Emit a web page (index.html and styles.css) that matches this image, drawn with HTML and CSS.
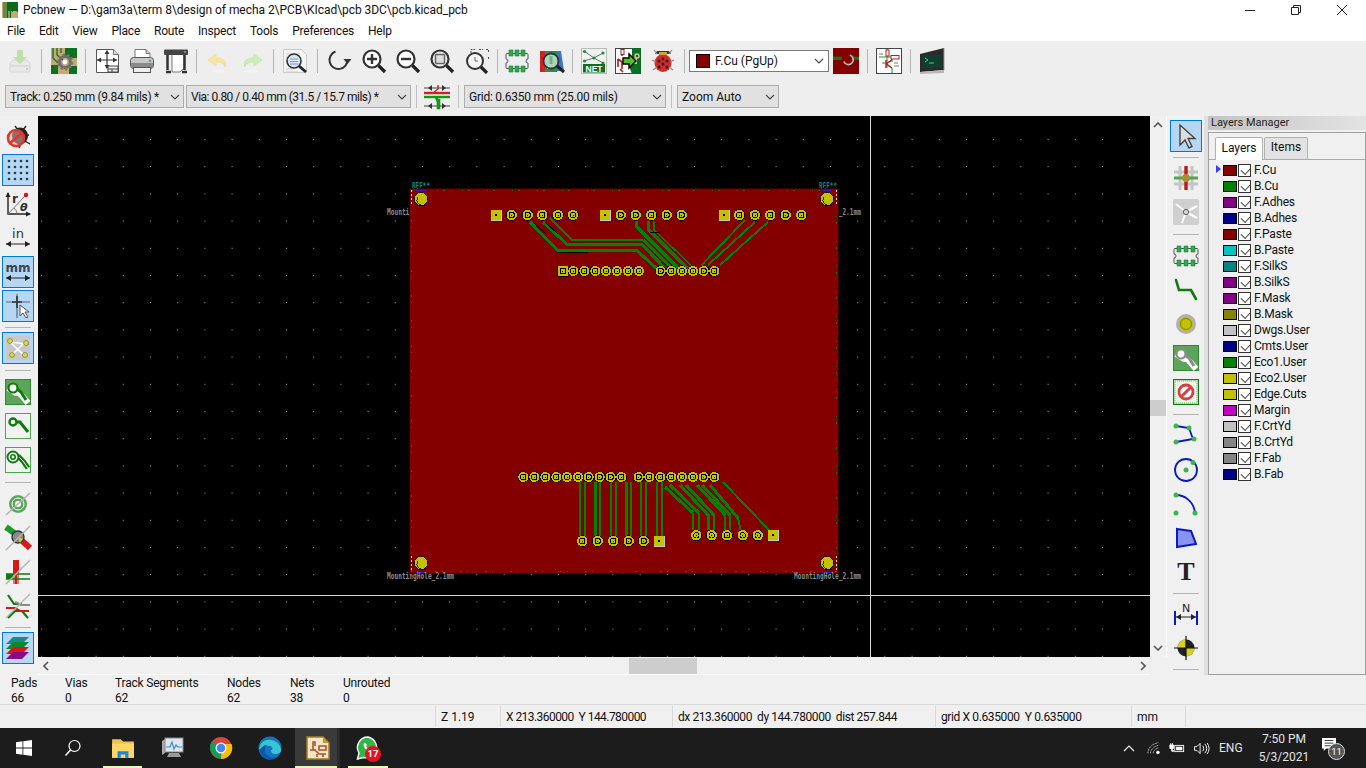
FILE: index.html
```html
<!DOCTYPE html>
<html lang="en">
<head>
<meta charset="utf-8">
<title>Pcbnew</title>
<link rel="stylesheet" href="styles.css">
</head>
<body>
<div class="app">
  <header class="titlebar">
    <svg class="appicon" viewBox="0 0 16 16"><rect width="16" height="16" fill="#0a6b1c"/><path d="M0 0h5v16H0zM9 9h7v7H9z" fill="#c8a86e"/><path d="M2 0v16M4 0v16M7 0v6l4 4M10 0v5l6 5M13 0v4" stroke="#0a6b1c" fill="none"/><path d="M7 9v7" stroke="#e9dcb0"/></svg>
    <span class="titletext">Pcbnew — D:\gam3a\term 8\design of mecha 2\PCB\KIcad\pcb 3DC\pcb.kicad_pcb</span>
    <div class="winctl">
      <svg viewBox="0 0 46 20"><path d="M18 10.500h10" stroke="#222"/></svg>
      <svg viewBox="0 0 46 20"><path d="M18.500 7.500h7v7h-7zM20.500 7.500v-2h7v7h-2" fill="none" stroke="#222"/></svg>
      <svg viewBox="0 0 46 20"><path d="M18 5l10 10M28 5L18 15" stroke="#222" fill="none"/></svg>
    </div>
  </header>
  <nav class="menubar"><span>File</span><span>Edit</span><span>View</span><span>Place</span><span>Route</span><span>Inspect</span><span>Tools</span><span>Preferences</span><span>Help</span></nav>

  <div class="toolbar1">
    <div class="tool"><svg viewBox="0 0 26 26"><path d="M3 15l3-3h14l3 3v8a1 1 0 0 1-1 1H4a1 1 0 0 1-1-1z" fill="#e8e8e8" stroke="#d6d6d6"/><path d="M3 18h20" stroke="#cfcfcf"/><circle cx="20" cy="21" r="1" fill="#a5dcae"/><path d="M10 2h6v7h4l-7 7-7-7h4z" fill="#bfe0a9"/></svg></div>
    <i class="sep s10"></i>
    <div class="tool"><svg viewBox="0 0 26 26"><rect width="26" height="26" fill="#c9a870"/><path d="M14 0h12v10H14zM18 18h8v8h-8zM0 17h7v9H0z" fill="#0d6e24"/><path d="M2 0v10l5 5M6 0v7l6 5M10 0v5M16 4h8M2 20h4" stroke="#14752b" stroke-width="1.400" fill="none"/><circle cx="14" cy="14" r="5.400" fill="none" stroke="#6e6e6e" stroke-width="3"/><circle cx="14" cy="14" r="7.400" fill="none" stroke="#777" stroke-width="2" stroke-dasharray="2.400 2.200"/><circle cx="14" cy="14" r="2.400" fill="#fff"/></svg></div>
    <i class="sep s9"></i>
    <div class="tool"><svg viewBox="0 0 26 26"><path d="M2.500 1.500h17l5 5v18h-22z" fill="#fff" stroke="#555"/><path d="M19.500 1.500v5h5" fill="#ddd" stroke="#777"/><path d="M13 3v17M3 12h20" stroke="#333" stroke-width="1.200"/><path d="M13 2l-2.500 4h5zM13 21l-2.500-4h5zM3 12l4-2.500v5zM23 12l-4-2.500v5z" fill="#333"/><path d="M14 18h10v6H14zM14 21h10M18 21v3" fill="#eee" stroke="#444"/></svg></div>
    <div class="tool"><svg viewBox="0 0 26 26"><path d="M6 1.500h11l4 4V11H6z" fill="#fff" stroke="#777"/><path d="M17 1.500v4h4" fill="#ccc" stroke="#777"/><rect x="1.500" y="9.500" width="23" height="11" rx="3" fill="#c8c8c8" stroke="#555"/><rect x="2" y="15" width="22" height="5" fill="#8a8a8a"/><circle cx="21" cy="13" r="1.200" fill="#3eb54a"/><rect x="4.500" y="19.500" width="17" height="5" fill="#eee" stroke="#555"/></svg></div>
    <div class="tool"><svg viewBox="0 0 26 26"><path d="M9 6h12v14l-4 4H9z" fill="#fff" stroke="#777"/><rect x="1" y="1.500" width="24" height="5.500" rx="1" fill="#444"/><circle cx="22" cy="4" r="1.200" fill="#3eb54a"/><path d="M4.500 7v15M3 24h5" stroke="#333" stroke-width="2.500" fill="none"/><path d="M21.500 7v15M19 24h5" stroke="#333" stroke-width="2.500" fill="none"/></svg></div>
    <i class="sep s7"></i>
    <div class="tool"><svg viewBox="0 0 26 26"><path d="M11 3L3 9l8 6v-4c5 0 8 1 9 5 2-6-2-9-9-9z" transform="translate(0 3)" fill="#f6e6a0" stroke="#efe0a0"/><ellipse cx="14" cy="23" rx="8" ry="1.500" fill="#f3f3f3"/></svg></div>
    <div class="tool"><svg viewBox="0 0 26 26"><path d="M15 3l8 6-8 6v-4c-5 0-8 1-9 5-2-6 2-9 9-9z" transform="translate(0 3)" fill="#cdeeb8" stroke="#c3e6ae"/><ellipse cx="12" cy="23" rx="8" ry="1.500" fill="#f3f3f3"/></svg></div>
    <i class="sep s9"></i>
    <div class="tool"><svg viewBox="0 0 26 26"><path d="M1.500 1.500h18l5 5v18h-23z" fill="#f4f4f4" stroke="#c9c9c9"/><path d="M4 6h14M4 9h6M4 21h8M4 24h12" stroke="#cbcbcb"/><circle cx="12" cy="13" r="7" fill="#d7e6f5" stroke="#333" stroke-width="1.600"/><path d="M8 11h8M8 13.500h8M8 16h8" stroke="#7d9cc6"/><path d="M17 18l7 6" stroke="#222" stroke-width="2.800"/></svg></div>
    <i class="sep s10"></i>
    <div class="tool"><svg viewBox="0 0 26 26"><path d="M9.500 3.500a9 9 0 1 0 12 8" fill="none" stroke="#333" stroke-width="2"/><path d="M17.500 11h8l-4 5z" fill="#333"/></svg></div>
    <div class="tool"><svg viewBox="0 0 26 26"><circle cx="11" cy="11" r="8.500" fill="#fff" stroke="#333" stroke-width="2.200"/><path d="M6 11h10M11 6v10" stroke="#333" stroke-width="2.400"/><path d="M17.500 17.500L24 24" stroke="#222" stroke-width="3.200"/></svg></div>
    <div class="tool"><svg viewBox="0 0 26 26"><circle cx="11" cy="11" r="8.500" fill="#fff" stroke="#333" stroke-width="2.200"/><path d="M6 11h10" stroke="#333" stroke-width="2.400"/><path d="M17.500 17.500L24 24" stroke="#222" stroke-width="3.200"/></svg></div>
    <div class="tool"><svg viewBox="0 0 26 26"><circle cx="11" cy="11" r="8.500" fill="#eee" stroke="#333" stroke-width="2.200"/><rect x="6.500" y="6.500" width="9" height="9" rx="1" fill="#ddd" stroke="#666" stroke-width="1.500"/><path d="M17.500 17.500L24 24" stroke="#222" stroke-width="3.200"/></svg></div>
    <div class="tool"><svg viewBox="0 0 26 26"><path d="M7 5V1.500h4M15 1.500h4M22 1.500h2.500V5M24.500 9v3" fill="none" stroke="#555" stroke-dasharray="2 1"/><circle cx="11" cy="13" r="8" fill="#f4f4f4" stroke="#333" stroke-width="2"/><path d="M11 9v4h3" stroke="#666" fill="none"/><path d="M17 19l6 6" stroke="#222" stroke-width="3.200"/></svg></div>
    <i class="sep s6"></i>
    <div class="tool"><svg viewBox="0 0 26 26"><path d="M3 5.500h20a1 1 0 0 1 1 1V11a2 2 0 0 0 0 4v4.500a1 1 0 0 1-1 1H3a1 1 0 0 1-1-1V15a2 2 0 0 0 0-4V6.500a1 1 0 0 1 1-1z" fill="#eee" stroke="#555"/><path d="M5 2h4v6H5zM11 2h4v6h-4zM17 2h4v6h-4zM5 18h4v6H5zM11 18h4v6h-4zM17 18h4v6h-4z" fill="#2fa84f" stroke="#1a7f36" stroke-width=".6"/></svg></div>
    <div class="tool"><svg viewBox="0 0 26 26"><path d="M16 3h6l3 20h-8z" fill="#3a76c4"/><rect x="1" y="3" width="7" height="21" fill="#d32020"/><rect x="6" y="3" width="12" height="21" fill="#2a8f45"/><path d="M8 6h4M8 20h4" stroke="#fff" stroke-width="2"/><circle cx="12" cy="13" r="7.500" fill="#cfe6d5" fill-opacity=".8" stroke="#333" stroke-width="1.800"/><path d="M12 8v8" stroke="#6eb584" stroke-width="3"/><path d="M18 18l7 6" stroke="#222" stroke-width="3"/></svg></div>
    <i class="sep s8"></i>
    <div class="tool"><svg viewBox="0 0 26 26"><rect x=".5" y=".5" width="25" height="25" fill="#f2f2f2" stroke="#bbb"/><path d="M3 3l10 7 9-5M3 13l10-3 9 5" stroke="#5a7d5a" fill="none"/><circle cx="3.500" cy="3.500" r="1.600" fill="#1d8a34"/><circle cx="13" cy="10" r="1.600" fill="#1d8a34"/><circle cx="22" cy="5" r="1.600" fill="#1d8a34"/><circle cx="3.500" cy="13" r="1.600" fill="#1d8a34"/><circle cx="22" cy="15" r="1.600" fill="#1d8a34"/><rect x="2" y="16" width="22" height="8.500" fill="#0c6e23"/><text x="13" y="24" class="nettext">NET</text></svg></div>
    <div class="tool"><svg viewBox="0 0 26 26"><rect x=".5" y=".5" width="25" height="25" fill="#fff" stroke="#444"/><path d="M17 0h9v26h-9l-3-8 3-10z" fill="#0b6e22"/><path d="M14 10h8v6h-8l3-3z" fill="#d8c48f"/><circle cx="22" cy="8" r="2" fill="none" stroke="#d8c48f" stroke-width="1.400"/><path d="M7 1v7M3 11l4 3v7M3 11v8M5 21l3 3" stroke="#b21c1c" stroke-width="1.600" fill="none"/><rect x="6" y="1.500" width="3" height="5" fill="#fff" stroke="#b21c1c"/><path d="M8 10h6V6l7 7-7 7v-4H8z" fill="#55c41f" stroke="#000" stroke-width="1.400"/></svg></div>
    <div class="tool"><svg viewBox="0 0 26 26"><ellipse cx="13" cy="15" rx="8.500" ry="9" fill="#d42a2a"/><path d="M5 6h16l-2-3H7z" fill="#333"/><path d="M9 4h8v3H9z" fill="#c6a733"/><circle cx="9" cy="13" r="1.600" fill="#322"/><circle cx="17" cy="13" r="1.600" fill="#322"/><circle cx="13" cy="11" r="1.400" fill="#322"/><circle cx="9" cy="19" r="1.600" fill="#322"/><circle cx="17" cy="19" r="1.600" fill="#322"/><circle cx="13" cy="16" r="1.600" fill="#322"/><path d="M4 2l3 4M22 2l-3 4M2 12l4 2M24 12l-4 2M3 22l4-3M23 22l-4-3" stroke="#8a8a8a" stroke-width="1.100"/></svg></div>
    <i class="sep s9"></i>
    <div class="layercombo"><span class="lc-sw"></span><span class="lc-text">F.Cu (PgUp)</span><svg class="chev" viewBox="0 0 10 6"><path d="M1 1l4 4 4-4" fill="none" stroke="#444" stroke-width="1.100"/></svg></div>
    <div class="tool"><svg viewBox="0 0 24 24"><rect width="24" height="24" fill="#840000"/><path d="M0 9.500h24" stroke="#0f7a0f" stroke-width="3"/><circle cx="13" cy="10" r="5" fill="#840000"/><path d="M15.500 6.500a4.500 4.500 0 1 1-5.500 6" fill="none" stroke="#bbb" stroke-width="1.600"/></svg></div>
    <i class="sep s8"></i>
    <div class="tool"><svg viewBox="0 0 26 26"><rect x=".5" y=".5" width="25" height="25" fill="#fff" stroke="#444"/><path d="M11 1v8M11 13v-4H3M17 9H11M16 14v-5M11 15h-5M11 12v8M11 16l5 4v5M11 15l5-3" stroke="#2a8a2a" fill="none"/><rect x="10" y="2" width="3" height="6" fill="#fff" stroke="#b42020"/><rect x="15" y="7.500" width="8" height="3.500" fill="#fff" stroke="#b42020"/><path d="M10 12v8M10 16l6-4M10 16l6 4" stroke="#b42020" stroke-width="1.400"/><path d="M3 6h4M18 15h4M18 18h5" stroke="#777"/></svg></div>
    <i class="sep s9"></i>
    <div class="tool"><svg viewBox="0 0 26 26"><path d="M1 6l24-6v22L1 24z" fill="#2a2a2a"/><path d="M1 24l24-2v3l-24 1z" fill="#b8b8b8"/><path d="M25 0v22" stroke="#999"/><rect x="4" y="7" width="18" height="13" fill="#0f3f2e"/><path d="M6 10l3 2-3 2M10 15h5" stroke="#3ddb5a" fill="none"/></svg></div>
  </div>

  <div class="toolbar2">
    <div class="combo w-track"><span>Track: 0.250 mm (9.84 mils) *</span><svg class="chev" viewBox="0 0 10 6"><path d="M1 1l4 4 4-4" fill="none" stroke="#444" stroke-width="1.100"/></svg></div>
    <div class="combo w-via"><span>Via: 0.80 / 0.40 mm (31.5 / 15.7 mils) *</span><svg class="chev" viewBox="0 0 10 6"><path d="M1 1l4 4 4-4" fill="none" stroke="#444" stroke-width="1.100"/></svg></div>
    <i class="sep2"></i>
    <div class="tool2"><svg viewBox="0 0 28 26"><path d="M1 4h26M1 22h26" stroke="#444"/><path d="M9 1l-4 3 4 3zM19 1l4 3-4 3zM9 19l-4 3 4 3zM19 19l4 3-4 3z" fill="#333"/><path d="M15 1v4l-5 4" stroke="#d02020" stroke-width="1.500" fill="none"/><path d="M1 9h26" stroke="#d02020" stroke-width="2.400"/><path d="M1 13h26" stroke="#119911" stroke-width="2.400"/><path d="M13 13l2 5v7M14 16h2v8h-2" stroke="#119911" stroke-width="2.600" fill="none"/></svg></div>
    <i class="sep2"></i>
    <div class="combo w-grid"><span>Grid: 0.6350 mm (25.00 mils)</span><svg class="chev" viewBox="0 0 10 6"><path d="M1 1l4 4 4-4" fill="none" stroke="#444" stroke-width="1.100"/></svg></div>
    <i class="sep3"></i>
    <div class="combo w-zoom"><span>Zoom Auto</span><svg class="chev" viewBox="0 0 10 6"><path d="M1 1l4 4 4-4" fill="none" stroke="#444" stroke-width="1.100"/></svg></div>
  </div>

  <div class="main">
    <aside class="vbar">
      <div class="vtool"><svg viewBox="0 0 26 26"><ellipse cx="15" cy="13" rx="8" ry="8.500" fill="#222"/><path d="M10 3l3 4M21 3l-3 4M24 12l-4 1M25 21l-5-3M14 25l2-4" stroke="#222" stroke-width="1.300"/><circle cx="11" cy="15" r="8" fill="#f5a9a0" fill-opacity=".55" stroke="#d83a30" stroke-width="2.600"/><path d="M5 20L17 10" stroke="#d83a30" stroke-width="2.600"/></svg></div>
      <div class="vtool on"><svg viewBox="0 0 26 26"><g fill="#2b3a4a"><circle cx="4" cy="4" r="1.300"/><circle cx="10" cy="4" r="1.300"/><circle cx="16" cy="4" r="1.300"/><circle cx="22" cy="4" r="1.300"/><circle cx="4" cy="10" r="1.300"/><circle cx="10" cy="10" r="1.300"/><circle cx="16" cy="10" r="1.300"/><circle cx="22" cy="10" r="1.300"/><circle cx="4" cy="16" r="1.300"/><circle cx="10" cy="16" r="1.300"/><circle cx="16" cy="16" r="1.300"/><circle cx="22" cy="16" r="1.300"/><circle cx="4" cy="22" r="1.300"/><circle cx="10" cy="22" r="1.300"/><circle cx="16" cy="22" r="1.300"/><circle cx="22" cy="22" r="1.300"/></g></svg></div>
      <div class="vtool"><svg viewBox="0 0 26 26"><path d="M3 2v21h22" fill="none" stroke="#222" stroke-width="1.400"/><path d="M3 1l-2.500 5h5zM26 23l-5-2.500v5z" fill="#222"/><path d="M3 23L20 5" stroke="#777"/><circle cx="21" cy="4" r="2.200" fill="#e01010"/><path d="M9 17a8 8 0 0 1 3 6" fill="none" stroke="#777"/><text x="7" y="12" class="ico-b13">r</text><text x="15" y="20" class="ico-i13">θ</text></svg></div>
      <div class="vtool"><svg viewBox="0 0 26 26"><text x="13" y="13" class="ico-in">in</text><path d="M1 19h24" stroke="#222"/><path d="M1 19l5-3v6zM25 19l-5-3v6z" fill="#222"/></svg></div>
      <div class="vtool on"><svg viewBox="0 0 26 26"><text x="13" y="13" class="ico-units">mm</text><path d="M1 19h24" stroke="#222"/><path d="M1 19l5-3v6zM25 19l-5-3v6z" fill="#222"/></svg></div>
      <div class="vtool on"><svg viewBox="0 0 26 26"><path d="M1 9h24M12 1v24" stroke="#5a6a78" stroke-width="1.200"/><path d="M7 9h10M12 3v12" stroke="#333" stroke-width="1.600"/><path d="M15 12v11l3-3 3 5 2-1-3-5h4z" fill="#fff" stroke="#555"/></svg></div>
      <i class="hsep"></i>
      <div class="vtool on"><svg viewBox="0 0 26 26"><rect x="1" y="1" width="24" height="24" fill="#c8c8c8"/><path d="M5 7l16 2M7 20l12-12M6 8l14 13" stroke="#fff" stroke-width="1.700"/><circle cx="5" cy="6" r="2.500" fill="#dcdc22" stroke="#666" stroke-width=".6"/><circle cx="21" cy="8" r="2.500" fill="#dcdc22" stroke="#666" stroke-width=".6"/><circle cx="7" cy="20" r="2.500" fill="#dcdc22" stroke="#666" stroke-width=".6"/><circle cx="20" cy="20" r="2.500" fill="#dcdc22" stroke="#666" stroke-width=".6"/></svg></div>
      <i class="hsep h10"></i>
      <div class="vtool"><svg viewBox="0 0 26 26"><rect width="26" height="26" fill="#5aa55a"/><rect x=".5" y=".5" width="25" height="25" fill="none" stroke="#2f8a2f"/><path d="M3 9l8 5 3 0 4 4 5 6" fill="none" stroke="#fff" stroke-width="6"/><path d="M3 10h9l4 3 5 8" fill="none" stroke="#0a7d0a" stroke-width="3"/><circle cx="8" cy="9" r="4.500" fill="#fff" stroke="#0a7d0a" stroke-width="2.200"/></svg></div>
      <div class="vtool"><svg viewBox="0 0 26 26"><rect x=".5" y=".5" width="25" height="25" fill="#f2f2f2" stroke="#4da64d"/><path d="M9 9h6l8 10" fill="none" stroke="#0a7d0a" stroke-width="3"/><circle cx="8" cy="9" r="3.500" fill="#fff" stroke="#0a7d0a" stroke-width="2.400"/></svg></div>
      <div class="vtool"><svg viewBox="0 0 26 26"><rect x=".5" y=".5" width="25" height="25" fill="#f2f2f2" stroke="#4da64d"/><path d="M7 10h7l4 4 5 7" fill="none" stroke="#0a7d0a" stroke-width="5"/><path d="M7 10h7l4 4 5 7" fill="none" stroke="#fff" stroke-width="1"/><circle cx="8" cy="10" r="5.500" fill="#fff" stroke="#0a7d0a" stroke-width="2"/><circle cx="8" cy="10" r="2.200" fill="#fff" stroke="#0a7d0a" stroke-width="1.600"/></svg></div>
      <i class="hsep h10"></i>
      <div class="vtool"><svg viewBox="0 0 26 26"><circle cx="13" cy="13" r="9" fill="#5aa55a"/><circle cx="13" cy="13" r="3" fill="#fff"/><circle cx="13" cy="13" r="6" fill="none" stroke="#fff"/><path d="M1 24L25 2" stroke="#b4b4b4" stroke-width="1.500"/></svg></div>
      <div class="vtool"><svg viewBox="0 0 26 26"><path d="M1 2l12 9" stroke="#1b9a2a" stroke-width="6"/><path d="M14 13l11 10" stroke="#d81818" stroke-width="6"/><circle cx="13" cy="12" r="6" fill="#8a8a8a" stroke="#333" stroke-width="1.400"/><path d="M13 12l5 2-3 4z" fill="#d8c81a"/><path d="M1 25L25 1" stroke="#b4b4b4" stroke-width="1.500"/></svg></div>
      <div class="vtool"><svg viewBox="0 0 26 26"><rect x="8" y="1" width="6" height="24" fill="#d81818"/><path d="M9 14v11M13 14v11" stroke="#fff" stroke-width=".8"/><path d="M1 15h24M1 20h24" stroke="#0a7d0a" stroke-width="1.600"/><rect x="1" y="15" width="7" height="5" fill="#0a7d0a"/><path d="M1 25L25 1" stroke="#b4b4b4" stroke-width="1.500"/></svg></div>
      <div class="vtool"><svg viewBox="0 0 26 26"><path d="M3 2l6 9h8M3 25l7-7h7l6 7" fill="none" stroke="#0a7d0a" stroke-width="2.200"/><path d="M10 9l6 3h9" fill="none" stroke="#8a8a8a" stroke-width="2.200"/><path d="M1 15h9l5 3h9" fill="none" stroke="#d81818" stroke-width="2.200"/><path d="M1 25L25 1" stroke="#b4b4b4" stroke-width="1.200"/></svg></div>
      <i class="hsep"></i>
      <div class="vtool on"><svg viewBox="0 0 26 26"><path d="M8 2h16l-7 7H1z" fill="#1d8a8a"/><path d="M8 7h16l-7 7H1z" fill="#0c8a2a"/><path d="M8 12h16l-7 7H1z" fill="#d81818"/><path d="M8 17h16l-7 7H1z" fill="#8a0a8a"/></svg></div>
    </aside>

    <section class="center">
      <div class="canvasrow">
        <svg class="canvas" viewBox="38 116 1112 541" preserveAspectRatio="none">
          <defs>
            <pattern id="griddots" x="14" y="3" width="27.2" height="27.2" patternUnits="userSpaceOnUse"><rect x="0" y="0" width="1" height="1" fill="#a8a8a8" shape-rendering="crispEdges"/></pattern>
            <g id="pad"><circle r="5.600" fill="#000"/><circle r="5" fill="#c2c200"/><circle r="3.200" fill="#000"/><circle r="2.300" fill="#c2c200"/><rect x="-.5" y="-.5" width="1" height="1" fill="#000"/></g>
            <g id="pad2"><circle r="5.800" fill="#000"/><circle r="5.200" fill="#c2c200"/><circle r="3.200" fill="#000"/><circle r="2.300" fill="#c2c200"/><rect x="-.5" y="-.5" width="1" height="1" fill="#000"/></g>
            <g id="padsq"><rect x="-5.500" y="-5.500" width="11" height="11" fill="#c2c200"/><path d="M-5.500 5.500h11v-11" fill="none" stroke="#c8c8c8"/><rect x="-1" y="-1" width="2" height="2" fill="#000"/></g>
            <g id="padsq2"><rect x="-5.500" y="-5.500" width="11" height="11" fill="#000"/><rect x="-4.800" y="-4.800" width="9.600" height="9.600" fill="#c2c200"/><rect x="-3" y="-3" width="6" height="6" fill="#000"/><rect x="-2.200" y="-2.200" width="4.400" height="4.400" fill="#c2c200"/><rect x="-.5" y="-.5" width="1" height="1" fill="#000"/></g>
            <g id="hole"><circle r="6.800" fill="#000"/><circle r="6.200" fill="#c2c200"/><path d="M-5-3a6 6 0 0 0 8 8" fill="none" stroke="#000" stroke-width=".8" transform="translate(1.500 1)"/></g>
          </defs>
          <rect x="38" y="116" width="1112" height="541" fill="#000"/>
          <rect x="38" y="116" width="1112" height="541" fill="url(#griddots)"/>
          <g class="crisp">
            <text x="387" y="215" textLength="67" lengthAdjust="spacingAndGlyphs" class="fab">MountingHole_2.1mm</text>
            <text x="794" y="215" textLength="67" lengthAdjust="spacingAndGlyphs" class="fab">MountingHole_2.1mm</text>
            <text x="412" y="189" textLength="18" lengthAdjust="spacingAndGlyphs" class="ref">REF**</text>
            <text x="819" y="189" textLength="18" lengthAdjust="spacingAndGlyphs" class="ref">REF**</text>
            <rect x="410" y="189" width="428" height="384" fill="#840000"/>
            <rect x="409.500" y="188.500" width="429" height="385" fill="none" stroke="#3a0000" stroke-width="1.500" stroke-dasharray="3 1"/>
            <rect x="411.500" y="190.500" width="425" height="381" fill="none" stroke="#0a7a0a" stroke-width="1" stroke-dasharray="1 5 2 17"/>
            <path d="M411.500 190v15M836.500 190v15M411.500 556v15M836.500 556v15" stroke="#e0e0e0" stroke-dasharray="2 2"/>
            <path d="M416 190.500h10M822 190.500h10M416 572h10M822 572h10" stroke="#2222cc"/>
            <g class="tr">
              <path d="M550 218l21.700 22h71.600"/>
              <path d="M745 220l-43.300 45M755 222l-47 43M768 222l-48 43"/>
              <path d="M580 482v54M585 482v54M600 482v54M611 482v54M616 482v54M631 482v54M641 482v54M646 482v54M657 482v54M662 482v54"/>
              <path d="M693 513v17M699 513v17M714 515v15M725 515v15M730 515v15M738 518l3 14M723 482l47 49"/>
            </g>
            <g class="trw">
              <path d="M530 222l28 28.700h79l22 20"/>
              <path d="M543 222l24 22.300h74.700l25 25.700"/>
              <path d="M643.300 240l30 30M636 221v5l44 44M648 221v8l41 41"/>
              <path d="M595 482v54M626 482v54"/>
              <path d="M665 487l28 26M670 485l29 28M680 485l28 30v15M686 485l28 30M697 485l28 30M702 485l28 30M710 485l28 33"/>
            </g>
            <path d="M654 221v9l40 38" class="trthin"/>
            <path d="M558 252h30M533 222l13 12M545 222l13 12M650 232h10" class="trblack"/>
            <use href="#padsq" x="496" y="215"/><use href="#pad2" x="511.700" y="215"/><use href="#pad2" x="527.700" y="215"/><use href="#pad2" x="542.300" y="215"/><use href="#pad2" x="558" y="215"/><use href="#pad2" x="573" y="215"/>
            <use href="#padsq" x="605" y="215"/><use href="#pad2" x="620.700" y="215"/><use href="#pad2" x="635.700" y="215"/><use href="#pad2" x="651.300" y="215"/><use href="#pad2" x="666.700" y="215"/><use href="#pad2" x="681.700" y="215"/>
            <use href="#padsq" x="724.300" y="215"/><use href="#pad2" x="739.300" y="215"/><use href="#pad2" x="755" y="215"/><use href="#pad2" x="770.300" y="215"/><use href="#pad2" x="785.700" y="215"/><use href="#pad2" x="801.300" y="215"/>
            <use href="#padsq2" x="562.700" y="271"/><use href="#pad" x="573.300" y="271"/><use href="#pad" x="584.300" y="271"/><use href="#pad" x="595.300" y="271"/><use href="#pad" x="606" y="271"/><use href="#pad" x="617" y="271"/><use href="#pad" x="628" y="271"/><use href="#pad" x="639" y="271"/>
            <use href="#pad" x="660.700" y="271"/><use href="#pad" x="671.300" y="271"/><use href="#pad" x="682" y="271"/><use href="#pad" x="693" y="271"/><use href="#pad" x="703.700" y="271"/><use href="#pad" x="714.300" y="271"/>
            <use href="#pad" x="523.300" y="477"/><use href="#pad" x="534.300" y="477"/><use href="#pad" x="545.300" y="477"/><use href="#pad" x="556.300" y="477"/><use href="#pad" x="567" y="477"/><use href="#pad" x="578" y="477"/><use href="#pad" x="588.700" y="477"/><use href="#pad" x="599.700" y="477"/><use href="#pad" x="610.700" y="477"/><use href="#pad" x="621.300" y="477"/>
            <use href="#pad" x="638.700" y="477"/><use href="#pad" x="649.300" y="477"/><use href="#pad" x="660.300" y="477"/><use href="#pad" x="671.300" y="477"/><use href="#pad" x="682" y="477"/><use href="#pad" x="693" y="477"/><use href="#pad" x="703.700" y="477"/><use href="#pad" x="714.300" y="477"/>
            <use href="#pad2" x="582.300" y="541"/><use href="#pad2" x="597.700" y="541"/><use href="#pad2" x="613.300" y="541"/><use href="#pad2" x="628.700" y="541"/><use href="#pad2" x="643.700" y="541"/><use href="#padsq" x="659.300" y="541"/>
            <use href="#pad2" x="696.300" y="535.300"/><use href="#pad2" x="711.700" y="535.300"/><use href="#pad2" x="727" y="535.300"/><use href="#pad2" x="742.700" y="535.300"/><use href="#pad2" x="757.700" y="535.300"/><use href="#padsq" x="773.300" y="535.300"/>
            <use href="#hole" x="421" y="199"/><use href="#hole" x="827" y="199"/><use href="#hole" x="421" y="563"/><use href="#hole" x="827" y="563"/>
            <text x="387" y="579" textLength="67" lengthAdjust="spacingAndGlyphs" class="fab">MountingHole_2.1mm</text>
            <text x="794" y="579" textLength="67" lengthAdjust="spacingAndGlyphs" class="fab">MountingHole_2.1mm</text>
          </g>
          <path d="M870.500 116v541M38 595.500h1112" stroke="#d8d8d8" stroke-width="1"/>
        </svg>
        <div class="vscroll">
          <svg class="sarrow" viewBox="0 0 10 6"><path d="M1 5l4-4 4 4" fill="none" stroke="#555" stroke-width="1.600"/></svg>
          <div class="strack"><div class="vthumb"></div></div>
          <svg class="sarrow" viewBox="0 0 10 6"><path d="M1 1l4 4 4-4" fill="none" stroke="#555" stroke-width="1.600"/></svg>
        </div>
      </div>
      <div class="hscroll">
        <svg class="sarrowh" viewBox="0 0 6 10"><path d="M5 1L1 5l4 4" fill="none" stroke="#555" stroke-width="1.600"/></svg>
        <div class="htrack"><div class="hthumb"></div></div>
        <svg class="sarrowh" viewBox="0 0 6 10"><path d="M1 1l4 4-4 4" fill="none" stroke="#555" stroke-width="1.600"/></svg>
      </div>
    </section>

    <aside class="vbar rbar">
      <div class="vtool on"><svg viewBox="0 0 26 26"><path d="M7 2v20l5-5 4 8 3-1.500-4-8h7z" fill="#ddd" stroke="#444" stroke-width="1.400"/></svg></div>
      <i class="hsep"></i>
      <div class="vtool"><svg viewBox="0 0 26 26"><path d="M1 7h24M1 19h24M7 1v24M19 1v24" stroke="#c4c4c4" stroke-width="3"/><path d="M1 13h24" stroke="#4fa84f" stroke-width="3"/><path d="M13 1v24" stroke="#c01818" stroke-width="3.400"/><circle cx="13" cy="13" r="4" fill="#a89030"/></svg></div>
      <div class="vtool dim"><svg viewBox="0 0 26 26"><rect width="26" height="26" rx="2" fill="#cfcfcf"/><path d="M3 5l10 8M24 7L13 13M13 13l-4 11M13 13l11 6" stroke="#fff" stroke-width="2"/><circle cx="13" cy="13" r="2.600" fill="#ddd" stroke="#555"/></svg></div>
      <i class="hsep h10"></i>
      <div class="vtool"><svg viewBox="0 0 26 26"><path d="M2 5.500h22a1 1 0 0 1 1 1V11a2 2 0 0 0 0 4v4.500a1 1 0 0 1-1 1H2a1 1 0 0 1-1-1V15a2 2 0 0 0 0-4V6.500a1 1 0 0 1 1-1z" fill="#eee" stroke="#555"/><path d="M4 3h4v6H4zM11 3h4v6h-4zM18 3h4v6h-4zM4 17h4v6H4zM11 17h4v6h-4zM18 17h4v6h-4z" fill="#2fa84f" stroke="#1a7f36" stroke-width=".6"/></svg></div>
      <div class="vtool"><svg viewBox="0 0 26 26"><path d="M3 3l3 10h12l5 9" fill="none" stroke="#0a7d0a" stroke-width="2.600" stroke-linecap="round"/></svg></div>
      <div class="vtool"><svg viewBox="0 0 26 26"><circle cx="13" cy="13" r="8.500" fill="#c2c200" stroke="#b0b0b0" stroke-width="3"/><circle cx="13" cy="13" r="5.500" fill="#c2c200" stroke="#807c00"/></svg></div>
      <div class="vtool"><svg viewBox="0 0 26 26"><rect width="26" height="26" fill="#5aa55a"/><rect x=".5" y=".5" width="25" height="25" fill="none" stroke="#2f8a2f"/><path d="M3 9l8 5 3 0 4 4 5 6" fill="none" stroke="#fff" stroke-width="6"/><path d="M3 10h9l4 3 5 8" fill="none" stroke="#8a8a8a" stroke-width="3"/><circle cx="8" cy="9" r="4.500" fill="#fff" stroke="#8a8a8a" stroke-width="2.200"/></svg></div>
      <div class="vtool"><svg viewBox="0 0 26 26"><rect x=".5" y=".5" width="25" height="25" fill="#bfe0bf" stroke="#0a7d0a"/><rect x="2" y="2" width="22" height="22" fill="#eaf5ea" stroke="#6dbb6d" stroke-dasharray="1 1"/><circle cx="13" cy="13" r="7" fill="#fff" stroke="#d84040" stroke-width="2.800"/><path d="M8 18L18 8" stroke="#d84040" stroke-width="3"/></svg></div>
      <i class="hsep h10"></i>
      <div class="vtool"><svg viewBox="0 0 26 26"><path d="M3 3l13 2 4 11L3 19" fill="none" stroke="#0a1ac0" stroke-width="1.800"/><circle cx="3" cy="3" r="2.500" fill="#3eb54a"/><circle cx="16" cy="5" r="2.500" fill="#3eb54a"/><circle cx="21" cy="16" r="2.500" fill="#3eb54a"/><circle cx="3" cy="19" r="2.500" fill="#3eb54a"/></svg></div>
      <div class="vtool"><svg viewBox="0 0 26 26"><circle cx="13" cy="13" r="11" fill="none" stroke="#0a1ac0" stroke-width="1.800"/><circle cx="13" cy="13" r="2.500" fill="#3eb54a"/><circle cx="20" cy="5.500" r="2.500" fill="#3eb54a"/></svg></div>
      <div class="vtool"><svg viewBox="0 0 26 26"><path d="M3 4c9 0 18 7 19 18" fill="none" stroke="#0a1ac0" stroke-width="1.800"/><circle cx="3" cy="4" r="2.500" fill="#3eb54a"/><circle cx="3" cy="22" r="2.500" fill="#3eb54a"/><circle cx="22" cy="22" r="2.500" fill="#3eb54a"/></svg></div>
      <div class="vtool"><svg viewBox="0 0 26 26"><path d="M4 4l14 2 5 13-19 3z" fill="#8892f0" stroke="#0a1ac0" stroke-width="2"/></svg></div>
      <div class="vtool"><svg viewBox="0 0 26 26"><text x="13" y="21" class="ico-t">T</text></svg></div>
      <i class="hsep"></i>
      <div class="vtool"><svg viewBox="0 0 26 26"><text x="13" y="11" class="ico-n">N</text><path d="M2 10v14M24 10v14" stroke="#0a1ac0" stroke-width="2"/><path d="M3 16h20" stroke="#222"/><path d="M3 16l5-3v6zM23 16l-5-3v6z" fill="#222"/></svg></div>
      <div class="vtool"><svg viewBox="0 0 26 26"><circle cx="13" cy="13" r="8.500" fill="#222"/><path d="M13 4.500a8.500 8.500 0 0 0-8.500 8.500H13zM13 21.500a8.500 8.500 0 0 0 8.500-8.500H13z" fill="#d8d020"/><path d="M13 1v24M1 13h24" stroke="#111" stroke-width="1.200"/></svg></div>
      <i class="hsep"></i>
    </aside>
    <div class="sash"></div>

    <aside class="layers">
      <div class="caption">Layers Manager</div>
      <div class="notebook">
        <div class="tabs"><span class="tab active">Layers</span><span class="tab">Items</span></div>
        <ul class="layerlist">
          <li class="current"><i class="sw c-red"></i><i class="cb"></i>F.Cu</li>
          <li><i class="sw c-green"></i><i class="cb"></i>B.Cu</li>
          <li><i class="sw c-purple"></i><i class="cb"></i>F.Adhes</li>
          <li><i class="sw c-navy"></i><i class="cb"></i>B.Adhes</li>
          <li><i class="sw c-red"></i><i class="cb"></i>F.Paste</li>
          <li><i class="sw c-cyan"></i><i class="cb"></i>B.Paste</li>
          <li><i class="sw c-teal"></i><i class="cb"></i>F.SilkS</li>
          <li><i class="sw c-purple"></i><i class="cb"></i>B.SilkS</li>
          <li><i class="sw c-purple"></i><i class="cb"></i>F.Mask</li>
          <li><i class="sw c-olive"></i><i class="cb"></i>B.Mask</li>
          <li><i class="sw c-silver"></i><i class="cb"></i>Dwgs.User</li>
          <li><i class="sw c-navy"></i><i class="cb"></i>Cmts.User</li>
          <li><i class="sw c-green"></i><i class="cb"></i>Eco1.User</li>
          <li><i class="sw c-yellow"></i><i class="cb"></i>Eco2.User</li>
          <li><i class="sw c-yellow"></i><i class="cb"></i>Edge.Cuts</li>
          <li><i class="sw c-magenta"></i><i class="cb"></i>Margin</li>
          <li><i class="sw c-silver"></i><i class="cb"></i>F.CrtYd</li>
          <li><i class="sw c-gray"></i><i class="cb"></i>B.CrtYd</li>
          <li><i class="sw c-gray"></i><i class="cb"></i>F.Fab</li>
          <li><i class="sw c-navy"></i><i class="cb"></i>B.Fab</li>
        </ul>
      </div>
    </aside>
  </div>

  <div class="msgpanel">
    <div class="stat st-pads"><span>Pads</span><span>66</span></div>
    <div class="stat st-vias"><span>Vias</span><span>0</span></div>
    <div class="stat st-track"><span>Track Segments</span><span>62</span></div>
    <div class="stat st-nodes"><span>Nodes</span><span>62</span></div>
    <div class="stat st-nets"><span>Nets</span><span>38</span></div>
    <div class="stat st-unr"><span>Unrouted</span><span>0</span></div>
  </div>

  <div class="statusbar">
    <span class="f f-a"></span>
    <span class="f f-z">Z 1.19</span>
    <span class="f f-xy">X 213.360000&nbsp; Y 144.780000</span>
    <span class="f f-dx">dx 213.360000&nbsp; dy 144.780000&nbsp; dist 257.844</span>
    <span class="f f-grid">grid X 0.635000&nbsp; Y 0.635000</span>
    <span class="f f-unit">mm</span>
    <span class="f f-end"></span>
  </div>

  <footer class="taskbar">
    <div class="tb tb-start"><svg viewBox="0 0 16 16"><path d="M0 2.200l6.500-.9v6.300H0zM7.300 1.200L16 0v7.600H7.300zM0 8.400h6.500v6.300L0 13.800zM7.300 8.400H16V16l-8.700-1.200z" fill="#fff"/></svg></div>
    <div class="tb tb-search"><svg viewBox="0 0 18 18"><circle cx="10.500" cy="7" r="5.500" fill="none" stroke="#fff" stroke-width="1.200"/><path d="M6.500 11L1.500 16.500" stroke="#fff" stroke-width="1.500"/></svg></div>
    <div class="tb tb-open tb-exp"><svg viewBox="0 0 22 22"><path d="M1 3h8l2 2h10v15H1z" fill="#f2c14e"/><path d="M1 7h20v13H1z" fill="#ffd766"/><path d="M6 20v-6h10v6h-3v-3H9v3z" fill="#1b86d6"/></svg></div>
    <div class="tb"><svg viewBox="0 0 24 24"><path d="M2 5l3-2v14l-3 2z" fill="#aaa"/><rect x="5" y="2" width="18" height="14" fill="#dfe6ee" stroke="#888"/><path d="M6 11h4l2-5 2 7 2-4 2 2h4" fill="none" stroke="#3d8ad6" stroke-width="1.200"/><path d="M9 17h10l2 4H7z" fill="#9a9a9a"/></svg></div>
    <div class="tb"><svg viewBox="0 0 24 24"><circle cx="12" cy="12" r="11" fill="#db4437"/><path d="M12 12l-5 9A11 11 0 0 1 3 5z" fill="#0f9d58"/><path d="M12 23a11 11 0 0 0 10.500-15H13z" fill="#fbbc05"/><path d="M12 12l-5 9a11 11 0 0 0 5 2z" fill="#0f9d58"/><circle cx="12" cy="12" r="5.500" fill="#fff"/><circle cx="12" cy="12" r="4.300" fill="#4285f4"/></svg></div>
    <div class="tb tb-edge"><svg viewBox="0 0 24 24"><circle cx="12" cy="12" r="11.500" fill="#1474c4"/><path d="M1 13C2 6 8 3 13 4c6 1 10 5 10 10 0 3-3 4-6 4-2 0-4-1-4-3 0-1 1-2 2-2-1-3-4-4-6-3-4 1-7 3-8 3z" fill="#37c6d0"/><path d="M10 23c-5-1-8-5-8-9 1-3 4-5 7-5-3 3-3 8 1 11 3 2 7 2 10 0-2 2-6 4-10 3z" fill="#0c59a4"/></svg></div>
    <div class="tb tb-kicad tb-open"><svg viewBox="0 0 24 24"><path d="M1 1h16l6 6v16H1z" fill="#f0e6c8" stroke="#a57b1f" stroke-width="1.500"/><path d="M17 1v6h6z" fill="#c49a1f"/><path d="M4 14h6M7 14V6h2v4M9 14l4 4h7M13 10h7v4h-7zM11 18v3M17 18v3" fill="none" stroke="#b5502a" stroke-width="1.600"/></svg></div>
    <div class="tb tb-wa tb-open"><svg viewBox="0 0 24 24"><path d="M12 1a10.500 10.500 0 0 0-9 16L1.500 23l6-1.500A10.500 10.500 0 1 0 12 1z" fill="#2fb745" stroke="#fff" stroke-width="1.400"/><path d="M8 7c-2 3 3 9 8 9l1.500-2-3-1.500-1 1c-1.500-.5-3-2-3.500-3.500l1-1L9.500 7z" fill="#fff"/></svg><span class="badge">17</span></div>
    <div class="tray">
      <svg class="t-chev" viewBox="0 0 12 7"><path d="M1 6l5-5 5 5" fill="none" stroke="#fff" stroke-width="1.100"/></svg>
      <svg class="t-wifi" viewBox="0 0 16 16"><path d="M1 14C1 8 6 3 13 2M4 14c0-4 4-8 9-9M7 14c0-2 2-5 6-6" fill="none" stroke="#ccc" stroke-width="1" stroke-dasharray="1.400 .6"/><circle cx="12.500" cy="13" r="2" fill="#fff"/></svg>
      <svg class="t-batt" viewBox="0 0 18 14"><rect x="6.500" y="3.500" width="10" height="7" fill="none" stroke="#fff"/><rect x="8" y="5" width="7" height="4" fill="#fff"/><path d="M1 3h4v4H1zM2 1v2M4 1v2M3 7v3h3" fill="#fff" stroke="#fff"/></svg>
      <svg class="t-vol" viewBox="0 0 18 14"><path d="M1.500 5h2.500l3.500-3.500v11L4 9H1.500z" fill="none" stroke="#fff"/><path d="M10 4a4 4 0 0 1 0 6M12.500 2a7 7 0 0 1 0 10M15 1a9.500 9.500 0 0 1 0 12" fill="none" stroke="#fff"/></svg>
      <span class="eng">ENG</span>
      <div class="clock"><span>7:50 PM</span><span>5/3/2021</span></div>
      <div class="notif"><svg viewBox="0 0 18 16"><path d="M1 1h16v12H6l-3 3v-3H1z" fill="#fff"/><path d="M4 4h10M4 7h10M4 10h7" stroke="#222"/></svg><span class="nbadge">11</span></div>
    </div>
  </footer>
</div>
</body>
</html>
```
FILE: styles.css
```css
* { box-sizing: border-box; }
html, body { margin: 0; padding: 0; height: 100%; overflow: hidden; }
body { font-family: "Roboto", "Liberation Sans", sans-serif; font-size: 12px; color: #111; background: #f0f0f0; }
.app { width: 1366px; height: 768px; display: flex; flex-direction: column; }

.titlebar { height: 20px; background: #fff; display: flex; align-items: center; padding-left: 2px; flex: none; }
.appicon { width: 16px; height: 16px; margin-right: 5px; }
.titletext { font-size: 12px; color: #111; white-space: nowrap; letter-spacing: -0.05px; }
.winctl { margin-left: auto; display: flex; margin-right: 1px; }
.winctl svg { width: 46px; height: 20px; display: block; }

.menubar { height: 21px; background: #fff; display: flex; align-items: center; gap: 13.900px; padding-left: 7px; flex: none; font-size: 12px; letter-spacing: -0.2px; }

.toolbar1 { height: 39px; background: #eee; display: flex; align-items: center; padding-left: 2.800px; flex: none; }
.tool { width: 34.400px; height: 26px; display: flex; justify-content: center; flex: none; }
.tool svg { width: 26px; height: 26px; display: block; }
.sep { display: block; flex: none; height: 24px; }
.sep::after { content: ""; display: block; width: 1px; height: 24px; background: #b4b4b4; margin: 0 auto; }
.s6 { width: 6px; } .s7 { width: 7px; } .s8 { width: 8px; } .s9 { width: 9px; } .s10 { width: 9.600px; }

.layercombo { width: 140px; height: 22px; background: #fff; border: 1px solid #7a7a7a; display: flex; align-items: center; padding: 0 4px 0 6px; flex: none; }
.lc-sw { width: 14px; height: 14px; background: #840000; border: 1px solid #000; margin-right: 5px; }
.lc-text { font-size: 12px; }
.chev { width: 10px; height: 6px; margin-left: auto; flex: none; }

.toolbar2 { height: 36px; background: #eee; display: flex; align-items: flex-start; padding: 5px 0 0 5px; flex: none; }
.combo { height: 23px; background: #e1e1e1; border: 1px solid #adadad; display: flex; align-items: center; padding: 0 3px 0 4px; font-size: 12px; white-space: nowrap; flex: none; }
.w-track { width: 179px; margin-right: 2px; letter-spacing: -0.31px; }
.w-via { width: 225px; letter-spacing: -0.5px; }
.w-grid { width: 202px; letter-spacing: -0.25px; }
.w-zoom { width: 102px; }
.sep2 { display: block; width: 1px; height: 23px; background: #c0c0c0; margin: 0 5px; flex: none; }
.sep3 { display: block; width: 1px; height: 23px; background: #c0c0c0; margin: 0 5px; flex: none; }
.tool2 { width: 32px; height: 26px; margin: -1px 0 0 -1px; flex: none; display: flex; justify-content: center; }
.tool2 svg { width: 28px; height: 26px; }

.main { flex: none; height: 559px; display: flex; background: #f0f0f0; }
.vbar { width: 38px; flex: none; display: flex; flex-direction: column; align-items: center; padding: 3px 2px 0 0; background: #f0f0f0; }
.rbar { width: 36px; padding: 3px 0 0 0; background: #f0f0f0; }
.vtool { width: 32px; height: 32px; margin: 1px 0; display: flex; align-items: center; justify-content: center; flex: none; }
.vtool svg { width: 26px; height: 26px; display: block; overflow: visible; }
.vtool.on { background: #b5d7f3; border: 1px solid #0078d7; }
.hsep { display: block; width: 26px; height: 8px; flex: none; }
.hsep::after { content: ""; display: block; height: 1px; background: #b4b4b4; margin-top: 4px; }
.h10 { height: 10px; } .h10::after { margin-top: 5px; }

.center { flex: 1; display: flex; flex-direction: column; min-width: 0; }
.canvasrow { height: 541px; display: flex; flex: none; }
.canvas { width: 1112px; height: 541px; display: block; flex: none; background: #000; }
.crisp { shape-rendering: crispEdges; text-rendering: optimizeSpeed; }
.fab { font-family: "DejaVu Sans Mono", monospace; font-size: 8px; font-weight: 700; fill: #8a8a8a; }
.ref { font-family: "DejaVu Sans Mono", monospace; font-size: 9px; font-weight: 700; fill: #008484; }
.tr path { fill: none; stroke: #008400; stroke-width: 2; }
.trw path { fill: none; stroke: #008400; stroke-width: 3; }
.trthin { fill: none; stroke: #008400; stroke-width: 1.500; }
.trblack { fill: none; stroke: #000; stroke-width: 1; }

.vscroll { width: 17px; height: 541px; flex: none; background: #f0f0f0; display: flex; flex-direction: column; align-items: center; border-right: 1px solid #fff; }
.sarrow { width: 10px; height: 6px; margin: 6px 0; flex: none; }
.strack { flex: 1; width: 100%; padding-top: 266px; }
.vthumb { width: 16px; height: 16px; background: #cdcdcd; }
.hscroll { width: 1112px; height: 18px; background: #f0f0f0; display: flex; align-items: center; border-bottom: 1px solid #fff; padding: 0 4px 0 5px; }
.sarrowh { width: 6px; height: 10px; flex: none; }
.htrack { flex: 1; height: 16px; padding-left: 580px; }
.hthumb { width: 68px; height: 16px; background: #cdcdcd; }

.sash { width: 4px; flex: none; background: #e0e0e0; }
.layers { width: 158px; flex: none; display: flex; flex-direction: column; }
.caption { height: 14px; font-size: 11px; line-height: 13px; padding-left: 3px; background: linear-gradient(90deg, #c3c3c3, #e3e3e3); color: #222; flex: none; }
.notebook { flex: 1; margin-top: 2px; border: 1px solid #a0a0a0; background: #f0f0f0; display: flex; flex-direction: column; }
.tabs { height: 27px; flex: none; border-bottom: 1px solid #aaa; display: flex; align-items: flex-end; padding-left: 6px; }
.tab { height: 22px; width: 44px; border: 1px solid #b0b0b0; border-bottom: 0; background: #e2e2e2; text-align: center; line-height: 19px; font-size: 12px; border-radius: 2px 2px 0 0; }
.tab.active { width: 48px; background: #fff; height: 23px; line-height: 20px; margin-bottom: -1px; margin-right: 1px; }
.layerlist { list-style: none; margin: 2px 0 0; padding: 0 0 0 14px; }
.layerlist li { height: 16px; display: flex; align-items: center; font-size: 12px; position: relative; letter-spacing: -0.2px; }
.current::before { content: ""; position: absolute; left: -7px; top: 3px; border-left: 5px solid #3a3aff; border-top: 4px solid transparent; border-bottom: 4px solid transparent; }
.sw { display: block; width: 14px; height: 11px; border: 1px solid #000; flex: none; margin-right: 1px; }
.cb { display: block; width: 13px; height: 13px; background: #fff; border: 1px solid #333; flex: none; margin-right: 3px; position: relative; }
.cb::after { content: ""; position: absolute; left: 3px; top: 1px; width: 6px; height: 7px; transform: rotate(42deg) scaleX(.9); border-right: 1.200px solid #444; border-bottom: 1.200px solid #444; }
.c-red { background: #840000; } .c-green { background: #008400; } .c-purple { background: #840084; } .c-navy { background: #000084; }
.c-cyan { background: #00c2c2; } .c-teal { background: #008484; } .c-olive { background: #848400; } .c-silver { background: #c2c2c2; }
.c-yellow { background: #c2c200; } .c-magenta { background: #c200c2; } .c-gray { background: #848484; }

.msgpanel { height: 30px; flex: none; background: #f0f0f0; display: flex; padding: 1px 0 0 11px; border-bottom: 1px solid #d8d8d8; font-size: 12px; letter-spacing: -0.2px; }
.stat { display: flex; flex-direction: column; line-height: 15px; flex: none; }
.st-pads { width: 54px; } .st-vias { width: 50px; } .st-track { width: 112px; } .st-nodes { width: 63px; } .st-nets { width: 53px; } .st-unr { width: 60px; }

.statusbar { height: 23px; flex: none; background: #f0f0f0; display: flex; font-size: 12px; padding-top: 1px; }
.f { display: block; height: 21px; line-height: 22px; border-right: 1px solid #d8d8d8; padding-left: 5px; white-space: nowrap; flex: none; }
.f-a { width: 436px; } .f-z { width: 65px; }
.f-xy { width: 172px; letter-spacing: -0.55px; }
.f-dx { width: 263px; letter-spacing: -0.43px; }
.f-grid { width: 196px; letter-spacing: -0.38px; }
.f-unit { width: 54px; } .f-end { width: 180px; border-right: 0; }

.taskbar { height: 40px; flex: none; background: #1c1c1c; display: flex; color: #fff; }
.tb { width: 49px; height: 40px; display: flex; align-items: center; justify-content: center; position: relative; flex: none; }
.tb svg { width: 24px; height: 24px; display: block; }
.tb-start { width: 48px; } .tb-start svg { width: 16px; height: 16px; }
.tb-search { width: 50px; } .tb-search svg { width: 18px; height: 18px; }
.tb-edge { width: 50px; }
.tb-open::after { content: ""; position: absolute; left: 5px; right: 5px; bottom: 0; height: 2px; background: #e8f8b8; }
.tb-kicad { background: #3a3a3a; width: 45px; padding-left: 4px; border-right: 3px solid #2b2b2b; }
.tb-kicad::after { left: 0; right: 0; }
.tb-wa { margin-left: 8px; width: 40px; }
.tb-wa::after { left: 0; right: 0; }
.badge { position: absolute; left: 17px; top: 18px; width: 16px; height: 16px; border-radius: 50%; background: #e81123; color: #fff; font-size: 9.500px; line-height: 16px; text-align: center; font-weight: 700; }
.tray { margin-left: auto; display: flex; align-items: center; height: 40px; padding-right: 21px; }
.t-chev { width: 12px; height: 7px; margin-right: 12px; }
.t-wifi { width: 14px; height: 14px; margin-right: 8px; }
.t-batt { width: 16px; height: 13px; margin-right: 7.500px; }
.t-vol { width: 17px; height: 13px; margin-right: 9.500px; }
.eng { font-size: 12px; width: 30px; margin-right: 4px; color: #e4e4e4; }
.clock { display: flex; flex-direction: column; align-items: center; font-size: 12px; line-height: 18px; width: 62px; margin-right: 6px; color: #e4e4e4; }
.notif { width: 24px; height: 24px; position: relative; }
.notif svg { width: 16px; height: 14px; display: block; margin-top: 1px; }
.nbadge { position: absolute; left: 7px; top: 7px; width: 17px; height: 17px; border-radius: 50%; background: #555; border: 1px solid #ddd; font-size: 9.500px; line-height: 15px; text-align: center; color: #fff; }

.nettext { font-family: "Liberation Sans", sans-serif; font-size: 8.500px; font-weight: 700; fill: #fff; text-anchor: middle; }
.ico-b13 { font-family: "DejaVu Sans", sans-serif; font-size: 12px; font-weight: 700; fill: #333; }
.ico-i13 { font-family: "DejaVu Sans", sans-serif; font-size: 11px; font-style: italic; font-weight: 700; fill: #333; }
.ico-in { font-family: "DejaVu Sans", sans-serif; font-size: 13px; fill: #333; text-anchor: middle; }
.ico-units { font-family: "DejaVu Sans", sans-serif; font-size: 12px; font-weight: 700; fill: #3a4754; text-anchor: middle; }
.ico-t { font-family: "Liberation Serif", serif; font-size: 26px; font-weight: 700; fill: #222; text-anchor: middle; }
.ico-n { font-family: "DejaVu Sans", sans-serif; font-size: 11px; fill: #222; text-anchor: middle; }
```
